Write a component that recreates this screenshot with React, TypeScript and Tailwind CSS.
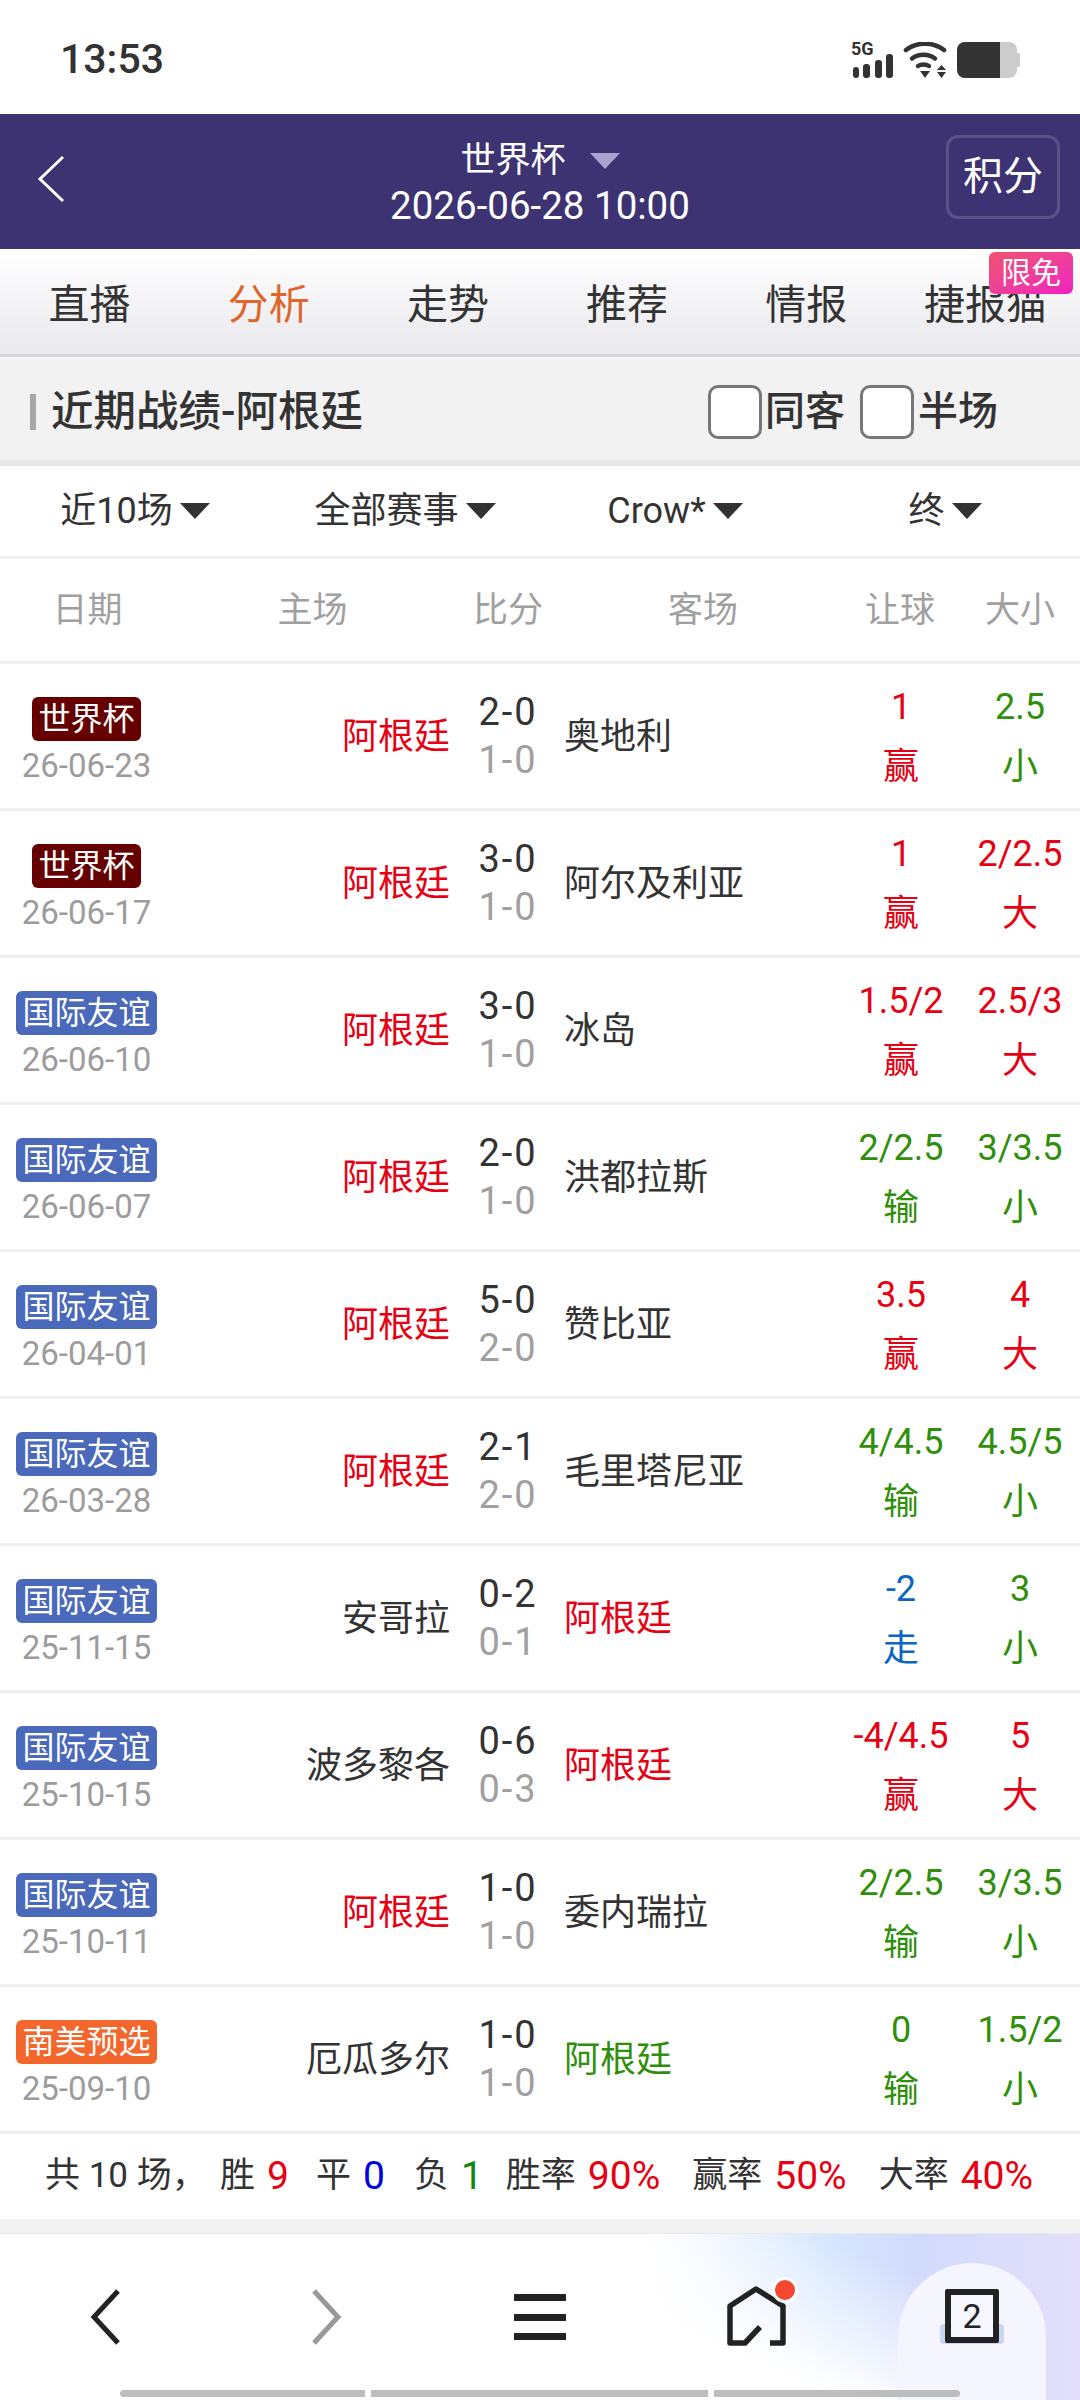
type Match = {
  league: string;
  leagueColor: string;
  date: string;
  home: string;
  away: string;
  homeColor: string;
  awayColor: string;
  score: string;
  half: string;
  line: string;
  lineResult: string;
  lineColor: string;
  size: string;
  sizeResult: string;
  sizeColor: string;
};

const RED = 'text-[#e60012]';
const GREEN = 'text-[#2f8f0a]';
const BLUE = 'text-[#0a66c2]';
const DARK = 'text-[#333333]';
const MAROON = 'bg-[#660000]';
const INDIGO = 'bg-[#4a69bb]';
const ORANGE = 'bg-[#f4672c]';

const matches: Match[] = [
  { league: '世界杯', leagueColor: MAROON, date: '26-06-23', home: '阿根廷', away: '奥地利', homeColor: RED, awayColor: DARK, score: '2-0', half: '1-0', line: '1', lineResult: '赢', lineColor: RED, size: '2.5', sizeResult: '小', sizeColor: GREEN },
  { league: '世界杯', leagueColor: MAROON, date: '26-06-17', home: '阿根廷', away: '阿尔及利亚', homeColor: RED, awayColor: DARK, score: '3-0', half: '1-0', line: '1', lineResult: '赢', lineColor: RED, size: '2/2.5', sizeResult: '大', sizeColor: RED },
  { league: '国际友谊', leagueColor: INDIGO, date: '26-06-10', home: '阿根廷', away: '冰岛', homeColor: RED, awayColor: DARK, score: '3-0', half: '1-0', line: '1.5/2', lineResult: '赢', lineColor: RED, size: '2.5/3', sizeResult: '大', sizeColor: RED },
  { league: '国际友谊', leagueColor: INDIGO, date: '26-06-07', home: '阿根廷', away: '洪都拉斯', homeColor: RED, awayColor: DARK, score: '2-0', half: '1-0', line: '2/2.5', lineResult: '输', lineColor: GREEN, size: '3/3.5', sizeResult: '小', sizeColor: GREEN },
  { league: '国际友谊', leagueColor: INDIGO, date: '26-04-01', home: '阿根廷', away: '赞比亚', homeColor: RED, awayColor: DARK, score: '5-0', half: '2-0', line: '3.5', lineResult: '赢', lineColor: RED, size: '4', sizeResult: '大', sizeColor: RED },
  { league: '国际友谊', leagueColor: INDIGO, date: '26-03-28', home: '阿根廷', away: '毛里塔尼亚', homeColor: RED, awayColor: DARK, score: '2-1', half: '2-0', line: '4/4.5', lineResult: '输', lineColor: GREEN, size: '4.5/5', sizeResult: '小', sizeColor: GREEN },
  { league: '国际友谊', leagueColor: INDIGO, date: '25-11-15', home: '安哥拉', away: '阿根廷', homeColor: DARK, awayColor: RED, score: '0-2', half: '0-1', line: '-2', lineResult: '走', lineColor: BLUE, size: '3', sizeResult: '小', sizeColor: GREEN },
  { league: '国际友谊', leagueColor: INDIGO, date: '25-10-15', home: '波多黎各', away: '阿根廷', homeColor: DARK, awayColor: RED, score: '0-6', half: '0-3', line: '-4/4.5', lineResult: '赢', lineColor: RED, size: '5', sizeResult: '大', sizeColor: RED },
  { league: '国际友谊', leagueColor: INDIGO, date: '25-10-11', home: '阿根廷', away: '委内瑞拉', homeColor: RED, awayColor: DARK, score: '1-0', half: '1-0', line: '2/2.5', lineResult: '输', lineColor: GREEN, size: '3/3.5', sizeResult: '小', sizeColor: GREEN },
  { league: '南美预选', leagueColor: ORANGE, date: '25-09-10', home: '厄瓜多尔', away: '阿根廷', homeColor: DARK, awayColor: GREEN, score: '1-0', half: '1-0', line: '0', lineResult: '输', lineColor: GREEN, size: '1.5/2', sizeResult: '小', sizeColor: GREEN },
];

const tabs = ['直播', '分析', '走势', '推荐', '情报', '捷报猫'];

const stats = [
  { label: '胜', value: '9', color: 'text-[#e60012] -mr-[5px]' },
  { label: '平', value: '0', color: 'text-[#0000dd] -mr-[3px]' },
  { label: '负', value: '1', color: 'text-[#118811] -mr-[9px]' },
  { label: '胜率', value: '90%', color: RED },
  { label: '赢率', value: '50%', color: RED },
  { label: '大率', value: '40%', color: RED },
];

function Caret({ className }: { className: string }) {
  return (
    <svg viewBox="0 0 30 16" className={className} fill="currentColor">
      <path d="M0 0h30L15 16z" />
    </svg>
  );
}

function StatusIcons() {
  return (
    <div className="flex items-center gap-[10px] text-[#333333]">
      <div className="relative h-9 w-[42px]">
        <span className="absolute left-0 top-0 text-[18px] font-bold leading-[14px]">5G</span>
        <svg width="42" height="36" viewBox="0 0 42 36" fill="currentColor">
          <rect x="2" y="25" width="6" height="11" rx="3" />
          <rect x="12" y="22" width="7" height="14" rx="3" />
          <rect x="24" y="18" width="7" height="18" rx="3" />
          <rect x="35" y="12" width="7" height="24" rx="3" />
        </svg>
      </div>
      <svg width="44" height="36" viewBox="0 0 44 36" fill="none" stroke="currentColor" strokeWidth="4.5" strokeLinecap="round">
        <path d="M3 8C14-0.500 30-0.500 41 8" />
        <path d="M9 16.500c7-5 16-5 23 0" />
        <path d="M15 24c3-2 8-2 11 0" />
        <path d="M17 29h10l-5 7z" fill="currentColor" stroke="none" />
        <path d="M38.500 23l4.500 5H34zM34 30h9l-4.500 6z" fill="currentColor" stroke="none" />
      </svg>
      <div className="flex items-center">
        <div className="flex h-9 w-[60px] overflow-hidden rounded-[8px] bg-[#cccccc]">
          <div className="w-[43px] bg-[#333333]" />
        </div>
        <div className="h-[14px] w-[3px] rounded-r-[2px] bg-[#cccccc]" />
      </div>
    </div>
  );
}

function Row({ m }: { m: Match }) {
  return (
    <div className="grid h-[147px] grid-cols-[175px_275px_116px_276px_118px_120px] items-center border-b-[3px] border-[#f0f0f0] text-[36px]">
      <div className="flex flex-col items-center pr-[2px] pt-[10px]">
        <span className={`rounded-[6px] px-[6px] text-[32px] leading-[44px] text-white ${m.leagueColor}`}>{m.league}</span>
        <span className="mt-[5px] text-[33px] leading-[40px] text-[#9c9c9c]">{m.date}</span>
      </div>
      <div className={`pt-[2px] text-right ${m.homeColor}`}>{m.home}</div>
      <div className="flex flex-col items-center text-[38px] leading-[48px] tracking-[2px]">
        <span className="text-[#333333]">{m.score}</span>
        <span className="text-[#a0a0a0]">{m.half}</span>
      </div>
      <div className={`-ml-[2px] pt-[2px] ${m.awayColor}`}>{m.away}</div>
      <div className={`flex flex-col items-center pt-[2px] leading-[60px] ${m.lineColor}`}>
        <span>{m.line}</span>
        <span>{m.lineResult}</span>
      </div>
      <div className={`flex flex-col items-center pt-[2px] leading-[60px] ${m.sizeColor}`}>
        <span>{m.size}</span>
        <span>{m.sizeResult}</span>
      </div>
    </div>
  );
}

export default function App() {
  return (
    <div className="flex h-[2400px] w-[1080px] flex-col overflow-hidden bg-white font-['Roboto','Noto_Sans_CJK_SC',sans-serif] text-[#333333]">
      <div className="flex h-[114px] shrink-0 items-center justify-between pl-[60px] pr-[60px] pt-[6px]">
        <span className="text-[41px] font-medium">13:53</span>
        <StatusIcons />
      </div>

      <header className="flex h-[135px] shrink-0 items-center justify-between bg-[#3d3373] pl-[20px] pr-[20px] text-white">
        <div className="-mt-[5px] w-[114px] pl-[17px]">
          <svg width="28" height="48" viewBox="0 0 28 48" fill="none" stroke="white" strokeWidth="3">
            <path d="M26 2 3 24l23 22" />
          </svg>
        </div>
        <div className="flex flex-col items-center">
          <div className="flex items-center gap-[24px] pt-[2px] text-[35px] leading-[46px]">
            世界杯
            <Caret className="h-[16px] w-[30px] text-[#a8a2cc]" />
          </div>
          <div className="text-[38.500px] leading-[44px]">2026-06-28 10:00</div>
        </div>
        <div className="-mt-[9px] flex h-[84px] w-[114px] items-center justify-center rounded-[12px] border-[3px] border-[#5a5287] text-[40px]">
          积分
        </div>
      </header>

      <nav className="relative grid h-[108px] shrink-0 grid-cols-6 items-center border-b-[3px] border-[#d5d5da] bg-gradient-to-b from-white to-[#e9e9ee] pr-[5px] pt-[8px] text-[41px]">
        {tabs.map((t) => (
          <div key={t} className={`text-center ${t === '分析' ? 'text-[#e0652a]' : 'text-[#333333]'}`}>
            {t}
          </div>
        ))}
        <span className="absolute right-[7px] top-[3px] rounded-[6px] bg-gradient-to-br from-[#f0506e] to-[#f01cc0] px-[12px] text-[30px] leading-[42px] text-white">
          限免
        </span>
      </nav>

      <section className="flex h-[109px] shrink-0 items-center justify-between border-b-[6px] border-[#e8e8e8] bg-[#f2f2f2] pl-[30px] pr-[82px] pt-[6px]">
        <div className="flex items-center gap-[15px]">
          <span className="h-[36px] w-[6px] bg-[#a6a6a6]" />
          <span className="text-[42.500px] font-medium">近期战绩-阿根廷</span>
        </div>
        <div className="flex items-center text-[40px] font-medium">
          <span className="mr-[3px] h-[54px] w-[54px] rounded-[10px] border-[3px] border-[#777777] bg-white" />
          <span>同客</span>
          <span className="ml-[15px] mr-[4px] h-[54px] w-[54px] rounded-[10px] border-[3px] border-[#777777] bg-white" />
          <span>半场</span>
        </div>
      </section>

      <div className="grid h-[93px] shrink-0 grid-cols-4 items-center border-b-[3px] border-[#f0f0f0] text-[36px]">
        {['近10场', '全部赛事', 'Crow*', '终'].map((f) => (
          <div key={f} className="flex items-center justify-center gap-[7px]">
            {f}
            <Caret className="h-[16px] w-[30px]" />
          </div>
        ))}
      </div>

      <div className="grid h-[105px] shrink-0 grid-cols-[175px_275px_116px_274px_120px_120px] items-center border-b-[3px] border-[#f0f0f0] pt-[2px] text-center text-[35px] text-[#a0a0a0]">
        {['日期', '主场', '比分', '客场', '让球', '大小'].map((h) => (
          <div key={h}>{h}</div>
        ))}
      </div>

      {matches.map((m) => (
        <Row key={m.date} m={m} />
      ))}

      <div className="flex h-[85px] shrink-0 items-center gap-[32px] pl-[45px] text-[35px]">
        <span className="-mr-[8px] w-[151px] whitespace-nowrap">共 10 场，</span>
        {stats.map((s) => (
          <span key={s.label} className="flex items-center gap-[12px]">
            {s.label}
            <span className={`text-[39px] ${s.color}`}>{s.value}</span>
          </span>
        ))}
      </div>

      <div className="h-[14px] shrink-0 bg-[#f2f2f2]" />

      <footer className="relative flex flex-1 overflow-hidden border-t-[1px] border-[#e8e8e8] bg-[linear-gradient(90deg,#ffffff_60%,#d6e6ff_77%,#d2dafc_85%,#e3dffa_100%)]">
        <span className="absolute inset-y-0 left-0 w-[920px] bg-[linear-gradient(20deg,#ffffff_62%,rgba(255,255,255,0)_92%)]" />
        <div className="relative grid w-full grid-cols-5 pt-[55px]">
          <div className="flex justify-center">
            <svg width="32" height="56" viewBox="0 0 32 56" fill="none" stroke="#222222" strokeWidth="5" className="-ml-[6px]">
              <path d="M29 2 5 28l24 26" />
            </svg>
          </div>
          <div className="flex justify-center">
            <svg width="32" height="56" viewBox="0 0 32 56" fill="none" stroke="#999999" strokeWidth="5" className="ml-[6px]">
              <path d="M3 2l24 26L3 54" />
            </svg>
          </div>
          <div className="flex justify-center">
            <svg width="52" height="46" viewBox="0 0 52 46" fill="#222222" className="mt-[5px]">
              <rect width="52" height="7" y="0" />
              <rect width="52" height="7" y="20" />
              <rect width="52" height="7" y="39" />
            </svg>
          </div>
          <div className="flex justify-center">
            <svg width="58" height="60" viewBox="0 0 58 60" fill="none" overflow="visible" className="-mt-[3px]">
              <path d="M33 41 18 57H3V20L29 3l27 17v37H43" stroke="#222222" strokeWidth="5.500" strokeLinejoin="round" />
              <circle cx="58" cy="4" r="11.500" fill="#f4472f" stroke="white" strokeWidth="3" />
            </svg>
          </div>
          <div className="relative flex justify-center">
            <span className="absolute left-[34px] top-[-26px] h-[200px] w-[148px] rounded-t-[74px] bg-[#f5f5ff]" />
            <span className="absolute left-[76px] top-[35px] h-[20px] w-[64px] rounded-[4px] bg-[#c8d7ef]" />
            <span className="relative flex h-[54px] w-[54px] items-center justify-center rounded-[2px] border-[6px] border-[#222222] bg-[#f7f7ff] text-[34px] text-[#222222]">
              2
            </span>
          </div>
        </div>
        <div className="absolute bottom-[3px] left-[120px] flex h-[7px] w-[840px] gap-[6px]">
          <span className="w-[245px] rounded-l-full bg-[#bdbdbd]" />
          <span className="w-[337px] bg-[#bdbdbd]" />
          <span className="w-[246px] rounded-r-full bg-[#bdbdbd]" />
        </div>
      </footer>
    </div>
  );
}
